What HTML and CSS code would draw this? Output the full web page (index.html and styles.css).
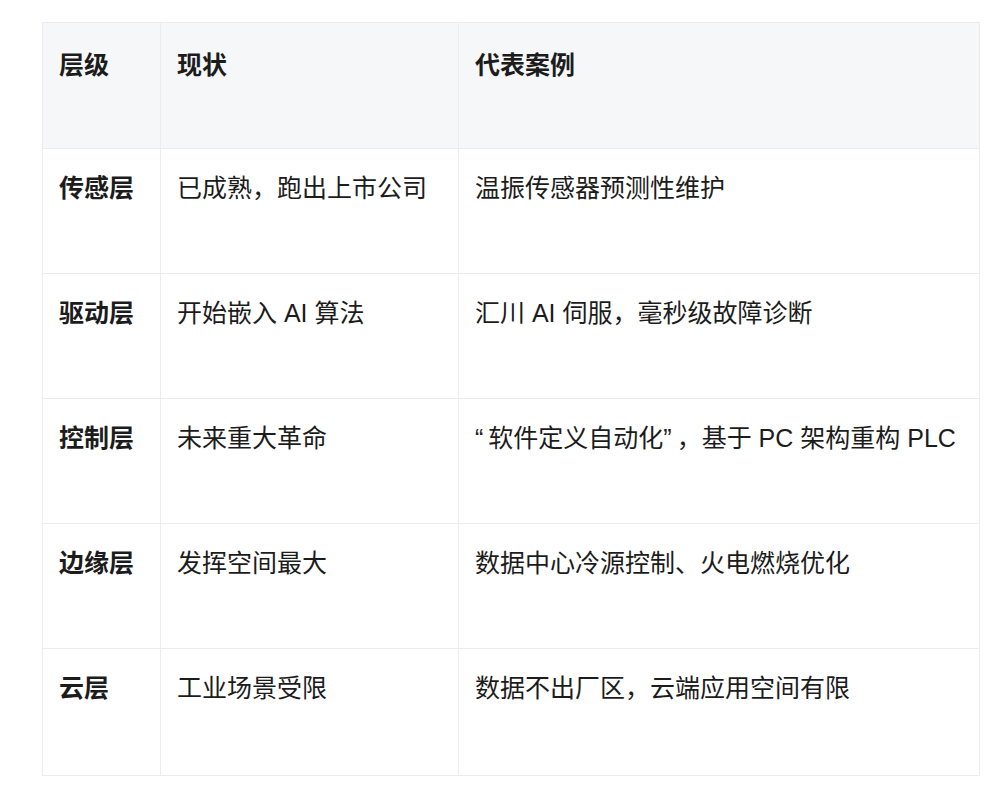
FILE: index.html
```html
<!DOCTYPE html>
<html lang="zh-CN">
<head>
<meta charset="utf-8">
<link rel="stylesheet" href="styles.css">
</head>
<body>
<div class="page">
<table class="grid">
  <colgroup>
    <col class="c1"><col class="c2"><col class="c3">
  </colgroup>
  <thead>
    <tr><th>层级</th><th>现状</th><th>代表案例</th></tr>
  </thead>
  <tbody>
    <tr><td class="lvl">传感层</td><td>已成熟，跑出上市公司</td><td>温振传感器预测性维护</td></tr>
    <tr><td class="lvl">驱动层</td><td>开始嵌入 AI 算法</td><td>汇川 AI 伺服，毫秒级故障诊断</td></tr>
    <tr><td class="lvl">控制层</td><td>未来重大革命</td><td><span class="q">“</span>软件定义自动化<span class="q">”</span>，基于 PC 架构重构 PLC</td></tr>
    <tr><td class="lvl">边缘层</td><td>发挥空间最大</td><td>数据中心冷源控制、火电燃烧优化</td></tr>
    <tr class="last"><td class="lvl">云层</td><td>工业场景受限</td><td>数据不出厂区，云端应用空间有限</td></tr>
  </tbody>
</table>
</div>
</body>
</html>
```
FILE: styles.css
```css
html, body {
  margin: 0;
  background: #ffffff;
}
.page {
  padding: 22px 0 0 42px;
}
.grid {
  border-collapse: collapse;
  width: 937px;
  table-layout: fixed;
  font-family: "Liberation Sans", "Noto Sans CJK SC", sans-serif;
  font-size: 25px;
  line-height: 40px;
  color: #1c1c1c;
}
.c1 { width: 118px; }
.c2 { width: 298px; }
.c3 { width: 521px; }
.grid th, .grid td {
  border: 1px solid #ececec;
  text-align: left;
  vertical-align: top;
  padding: 19px 8px 0 16px;
  white-space: nowrap;
}
.grid th {
  background: #f6f7f9;
  font-weight: 700;
  height: 103px;
  padding-top: 22px;
}
.grid td {
  height: 105px;
  font-weight: 400;
}
.grid tr.last td {
  height: 107px;
}
.grid td.lvl {
  font-weight: 700;
}
.q {
  letter-spacing: 5px;
}
```
